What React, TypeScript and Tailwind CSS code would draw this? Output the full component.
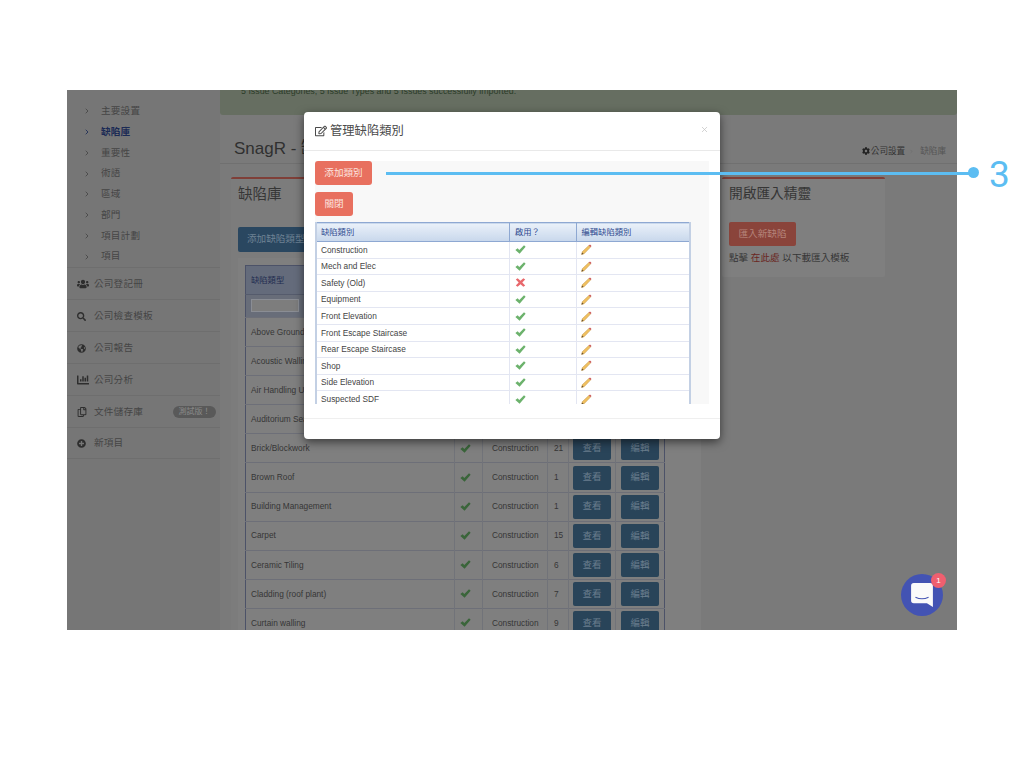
import { FaChartBar, FaCog, FaGlobeAmericas, FaPlusCircle, FaRegCopy, FaRegEdit, FaSearch, FaUsers } from "react-icons/fa";
import { LuChevronRight, LuX } from "react-icons/lu";

const cjk = "font-['Liberation_Sans','Noto_Sans_CJK_TC',sans-serif]";

// --- Sidebar data ---
const subItems = ["主要設置", "缺陷庫", "重要性", "術語", "區域", "部門", "項目計劃", "項目"];

const mainItems = [
  { label: "公司登記冊", icon: <FaUsers className="w-[12px] h-[12px]" /> },
  { label: "公司檢查模板", icon: <FaSearch className="w-[9px] h-[9px]" /> },
  { label: "公司報告", icon: <FaGlobeAmericas className="w-[9px] h-[9px]" /> },
  { label: "公司分析", icon: <FaChartBar className="w-[12px] h-[12px]" /> },
  { label: "文件儲存庫", icon: <FaRegCopy className="w-[10px] h-[10px]" />, badge: "測試版！" },
  { label: "新項目", icon: <FaPlusCircle className="w-[9px] h-[9px]" /> },
];

// --- Table data ---
const issueRows = [
  ["Above Ground Drainage", "Construction", "4"],
  ["Acoustic Walling", "Construction", "3"],
  ["Air Handling Unit", "Construction", "2"],
  ["Auditorium Seating", "Construction", "5"],
  ["Brick/Blockwork", "Construction", "21"],
  ["Brown Roof", "Construction", "1"],
  ["Building Management", "Construction", "1"],
  ["Carpet", "Construction", "15"],
  ["Ceramic Tiling", "Construction", "6"],
  ["Cladding (roof plant)", "Construction", "7"],
  ["Curtain walling", "Construction", "9"],
];

const categories = [
  { name: "Construction", on: true },
  { name: "Mech and Elec", on: true },
  { name: "Safety (Old)", on: false },
  { name: "Equipment", on: true },
  { name: "Front Elevation", on: true },
  { name: "Front Escape Staircase", on: true },
  { name: "Rear Escape Staircase", on: true },
  { name: "Shop", on: true },
  { name: "Side Elevation", on: true },
  { name: "Suspected SDF", on: true },
];

function Check({ color }: { color: string }) {
  return (
    <svg viewBox="0 0 12 10" className={`w-[11px] h-[9px] ${color}`}>
      <path d="M0.3 5.6 L2.8 3.6 L4.7 5.6 L9.9 0.3 L11.7 1.9 L5 9.7 Z" fill="currentColor" />
    </svg>
  );
}

function Cross() {
  return (
    <svg viewBox="0 0 12 10" className="w-[11px] h-[9px] text-[#e8686c]">
      <path d="M0.8 1.6 L2.8 0.2 L6 3 L9.2 0.2 L11.2 1.6 L8 5 L11.2 8.4 L9.2 9.8 L6 7 L2.8 9.8 L0.8 8.4 L4 5 Z" fill="currentColor" />
    </svg>
  );
}

function Pencil() {
  return (
    <svg viewBox="0 0 12 12" className="w-[11px] h-[11px]">
      <path d="M0.6 11.4 L1.4 8.4 L8.6 1.6 L10.4 3.4 L3.4 10.6 Z" fill="#f0c060" stroke="#bd8a34" strokeWidth="0.5" />
      <path d="M0.6 11.4 L1.2 9.2 L2.8 10.8 Z" fill="#5d4a32" />
      <path d="M8.6 1.6 L9.8 0.5 L11.5 2.2 L10.4 3.4 Z" fill="#c9504f" />
    </svg>
  );
}

function Sidebar() {
  return (
    <div className="w-[153px] h-full shrink-0 bg-[#767676] pt-[11px] text-[#454545] text-[9.6px]">
      <div className="h-[166px] flex flex-col">
        {subItems.map((item) => (
          <div
            key={item}
            className={`h-[20.9px] pl-[16px] flex items-center gap-[10px] ${item === "缺陷庫" ? "text-[#1b2a55] font-bold" : ""}`}
          >
            <LuChevronRight className="w-[8px] h-[8px] shrink-0" strokeWidth={2.5} />
            <span className="tracking-[0.2px]">{item}</span>
          </div>
        ))}
      </div>
      {mainItems.map((item) => (
        <div key={item.label} className="h-[32px] pl-[10px] pr-[4px] pt-[1px] flex items-center border-t border-[#6e6e6e] last:border-b">
          <span className="w-[17px] shrink-0 text-[#2e2e2e]">{item.icon}</span>
          <span className="tracking-[0.2px]">{item.label}</span>
          {item.badge && (
            <span className="ml-auto w-[43px] h-[12px] rounded-full bg-[#595959] text-[#8b8b8b] text-[8px] flex items-center justify-center">
              {item.badge}
            </span>
          )}
        </div>
      ))}
    </div>
  );
}

function IssueTable() {
  return (
    <table className="w-[419px] table-fixed border-collapse border border-[#4c5268] text-[8.3px] text-[#363636]">
      <colgroup>
        <col className="w-[209px]" />
        <col className="w-[28px]" />
        <col className="w-[65px]" />
        <col className="w-[21px]" />
        <col className="w-[47px]" />
        <col className="w-[49px]" />
      </colgroup>
      <thead>
        <tr className="h-[29px] bg-[#646b7b] text-[#222c50] text-left">
          <th className="pl-[5px] font-normal border-b border-[#555b6c]">缺陷類型</th>
          <th colSpan={5}></th>
        </tr>
        <tr className="h-[23px] bg-[#686d79]">
          <td className="pl-[5px]">
            <div className="w-[48px] h-[13px] -mt-[1px] bg-[#7d7d7d] border border-[#8a8d94]"></div>
          </td>
          <td colSpan={5}></td>
        </tr>
      </thead>
      <tbody>
        {issueRows.map((row) => (
          <tr key={row[0]} className="h-[29.1px] border-t border-[#6d6f78]">
            <td className="pl-[5px] whitespace-nowrap overflow-hidden">{row[0]}</td>
            <td className="pl-[5px] border-l border-[#717379]">
              <Check color="text-[#3a653a]" />
            </td>
            <td className="pl-[9px] border-l border-[#717379]">{row[1]}</td>
            <td className="pl-[6px] border-l border-[#717379]">{row[2]}</td>
            <td className="border-l border-[#717379] text-center">
              <div className="mx-auto w-[38px] h-[24px] rounded-[2px] bg-[#294459] text-[#6a7d8e] text-[9.5px] flex items-center justify-center">查看</div>
            </td>
            <td className="border-l border-[#717379] text-center">
              <div className="mx-auto w-[38px] h-[24px] rounded-[2px] bg-[#294459] text-[#6a7d8e] text-[9.5px] flex items-center justify-center">編輯</div>
            </td>
          </tr>
        ))}
      </tbody>
    </table>
  );
}

function CategoryModal() {
  return (
    <div className="absolute left-[237px] top-[22px] w-[416px] h-[327px] bg-white rounded-[4px] shadow-[0_3px_10px_rgba(0,0,0,0.55)] flex flex-col">
      <div className="h-[39px] shrink-0 pl-[11px] pr-[11px] pt-[1px] border-b border-[#e9e9e9] flex items-center text-[#4a4a4a]">
        <FaRegEdit className="w-[12px] h-[12px] mr-[3px] -mt-[2px]" />
        <span className="text-[12.3px]">管理缺陷類別</span>
        <LuX className="ml-auto -mt-[5px] w-[9px] h-[9px] text-[#c4c4c4]" />
      </div>
      <div className="h-[268px] shrink-0 pl-[11px] pr-[11px] pt-[10px] border-b border-[#efefef]">
        <div className="w-[394px] h-[243px] bg-[#f8f8f8] overflow-hidden">
          <div className="w-[57px] h-[24px] rounded-[3px] bg-[#e8705f] text-[#fbe3df] text-[9.6px] flex items-center justify-center">添加類別</div>
          <div className="mt-[7px] w-[38px] h-[24px] rounded-[3px] bg-[#e8705f] text-[#fbe3df] text-[9.6px] flex items-center justify-center">關閉</div>
          <div className="mt-[6px] w-[376px] border-x-2 border-[#c3d0e4]">
            <table className="w-full table-fixed border-collapse bg-white text-[8.3px] text-[#444444]">
              <colgroup>
                <col className="w-[192.5px]" />
                <col className="w-[66.5px]" />
                <col className="w-[113px]" />
              </colgroup>
              <thead>
                <tr className="h-[19px] bg-gradient-to-b from-[#e9f0f9] to-[#c9d8ec] text-[#2f4a8f] text-left border-y border-[#8ea8d2]">
                  <th className="pl-[4px] font-normal">缺陷類別</th>
                  <th className="pl-[5px] font-normal border-l border-[#8ea8d2]">啟用？</th>
                  <th className="pl-[5px] font-normal border-l border-[#8ea8d2]">編輯缺陷類別</th>
                </tr>
              </thead>
              <tbody>
                {categories.map((cat) => (
                  <tr key={cat.name} className="h-[16.6px] border-b border-[#e3e6f2]">
                    <td className="pl-[4px]">{cat.name}</td>
                    <td className="pl-[5px] border-l border-[#e3e6f2]">
                      {cat.on ? <Check color="text-[#6cb26c]" /> : <Cross />}
                    </td>
                    <td className="pl-[4px] border-l border-[#e3e6f2]">
                      <Pencil />
                    </td>
                  </tr>
                ))}
              </tbody>
            </table>
          </div>
        </div>
      </div>
    </div>
  );
}

export default function App() {
  return (
    <div className={`w-[1024px] h-[768px] bg-white pl-[67px] pt-[90px] relative overflow-hidden ${cjk}`}>
      {/* Screenshot frame */}
      <div className="relative w-[890px] h-[540px] overflow-hidden flex bg-[#7a7a7a]">
        <Sidebar />

        <div className="flex-1 min-w-0">
          {/* Alert */}
          <div className="h-[25px] bg-[#666e61] rounded-b-[3px] pl-[21px] text-[8.85px] text-[#2c3d29] leading-[3px]">
            5 Issue Categories, 5 Issue Types and 5 Issues successfully imported.
          </div>

          {/* Page title */}
          <div className="h-[49px] pl-[14px] pr-[11px] pt-[21px] border-b border-[#707070] flex justify-between">
            <span className="text-[17px] leading-[26px] text-[#303030]">SnagR - 缺陷庫</span>
            <div className="flex items-center gap-[4px] text-[8.6px] h-[26px] pt-[5px]">
              <span className="flex items-center gap-[1px] text-[#333333]">
                <FaCog className="w-[8px] h-[8px] text-[#222222]" />
                公司設置
              </span>
              <LuChevronRight className="w-[5px] h-[5px] text-[#666666]" />
              <span className="text-[#555555] ml-[2px]">缺陷庫</span>
            </div>
          </div>

          {/* Panels */}
          <div className="pt-[13px] pl-[11px] flex gap-[21px]">
            <div className="w-[470px] border-t-2 border-[#7f3f38] bg-[#7c7c7c] rounded-t-[2px] pl-[7px] pt-[5px] text-[#363636]">
              <div className="text-[14.5px] leading-[20px]">缺陷庫</div>
              <div className="mt-[23px] w-[90px] h-[25px] rounded-[2px] bg-[#2a4760] text-[#6e8294] text-[9.6px] pl-[9px] flex items-center">添加缺陷類型</div>
              <div className="mt-[6px] bg-[#7f7f7f] pl-[7px] pt-[7px] pb-[4px]">
                <IssueTable />
              </div>
            </div>

            <div className="w-[163px] h-[100px] border-t-2 border-[#7f3f38] bg-[#7f7f7f] rounded-[2px] pl-[7px] pt-[5px] text-[#363636]">
              <div className="text-[13.7px] leading-[20px]">開啟匯入精靈</div>
              <div className="mt-[18px] w-[67px] h-[24px] rounded-[2px] bg-[#8a443b] text-[#b5837a] text-[9.6px] flex items-center justify-center">匯入新缺陷</div>
              <div className="mt-[5px] text-[9.6px] whitespace-nowrap">
                點擊 <span className="text-[#6a2622]">在此處</span> 以下載匯入模板
              </div>
            </div>
          </div>
        </div>

        <CategoryModal />

        {/* Chat launcher */}
        <div className="absolute left-[834px] top-[484px] w-[42px] h-[42px] rounded-full bg-[#4353b3] flex items-center justify-center">
          <svg viewBox="0 0 20 22" className="w-[22px] h-[24px]">
            <path d="M2.5 0 H17.5 A2.5 2.5 0 0 1 20 2.5 V22 L14.5 18.5 H2.5 A2.5 2.5 0 0 1 0 16 V2.5 A2.5 2.5 0 0 1 2.5 0 Z" fill="#fafafa" />
            <path d="M4 13 Q10 16 16 13" fill="none" stroke="#4353b3" strokeWidth="1" />
          </svg>
          <span className="absolute -top-[1px] -right-[3px] w-[15px] h-[15px] rounded-full bg-[#ef5f6f] text-white text-[8px] flex items-center justify-center">1</span>
        </div>
      </div>

      {/* Callout */}
      <div className="absolute left-[386px] top-[171.5px] w-[588px] h-[3px] bg-[#5cbdf2]"></div>
      <div className="absolute left-[968px] top-[167px] w-[11px] h-[11px] rounded-full bg-[#5cbdf2]"></div>
      <div className="absolute left-[989px] top-[152px] text-[37px] leading-[45px] font-normal font-['Roboto',sans-serif] text-[#5cbdf2]">3</div>
    </div>
  );
}
